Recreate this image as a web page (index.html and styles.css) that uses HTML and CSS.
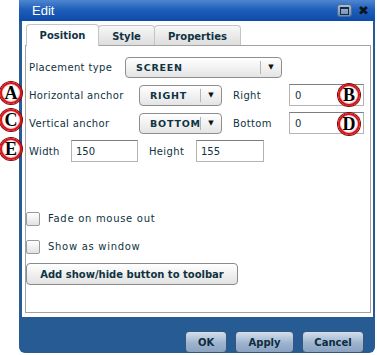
FILE: index.html
```html
<!DOCTYPE html>
<html lang="en">
<head>
  <meta charset="UTF-8">
  <title>Edit</title>
  <link rel="stylesheet" href="styles.css">
</head>
<body>
  <div class="dialog">
    <div class="titlebar">
      <span class="title">Edit</span>
      <span class="win-btn max"><span></span></span>
      <span class="win-btn close">&#x2716;</span>
    </div>

    <div class="body">
      <div class="tabs">
        <div class="tab active">Position</div>
        <div class="tab">Style</div>
        <div class="tab">Properties</div>
      </div>

      <div class="panel">
        <div class="row">
          <span class="label w-place">Placement type</span>
          <div class="select w-screen"><span class="value">SCREEN</span><span class="arrow">&#9660;</span></div>
        </div>
        <div class="row">
          <span class="label w-anchor">Horizontal anchor</span>
          <div class="select w-small"><span class="value">RIGHT</span><span class="arrow">&#9660;</span></div>
          <span class="label w-side">Right</span>
          <input class="field w-side-input" type="text" value="0">
        </div>
        <div class="row">
          <span class="label w-anchor">Vertical anchor</span>
          <div class="select w-small"><span class="value">BOTTOM</span><span class="arrow">&#9660;</span></div>
          <span class="label w-side">Bottom</span>
          <input class="field w-side-input" type="text" value="0">
        </div>
        <div class="row">
          <span class="label w-width">Width</span>
          <input class="field w-size" type="text" value="150">
          <span class="label w-height">Height</span>
          <input class="field w-size2" type="text" value="155">
        </div>

        <label class="check first"><span class="box"></span>Fade on mouse out</label>
        <label class="check"><span class="box"></span>Show as window</label>

        <button class="wide-btn">Add show/hide button to toolbar</button>
      </div>
    </div>

    <div class="footer">
      <button class="dlg-btn ok">OK</button>
      <button class="dlg-btn apply">Apply</button>
      <button class="dlg-btn cancel">Cancel</button>
    </div>
  </div>

  <!-- callout markers -->
  <span class="badge" style="left:0;top:82px">A</span>
  <span class="badge" style="left:338px;top:84px">B</span>
  <span class="badge" style="left:0;top:109px">C</span>
  <span class="badge" style="left:338px;top:113px">D</span>
  <span class="badge" style="left:0;top:138px">E</span>
</body>
</html>
```

FILE: styles.css
```css
:root {
  --frame: #275b94;
  --text: #0f3342;
  --line: #a3a3a3;
}

body {
  margin: 0;
  background: #fff;
  font-family: 'DejaVu Sans', sans-serif;
  font-size: 10px;
  color: var(--text);
  position: relative;
  width: 377px;
  height: 355px;
  overflow: hidden;
}

.dialog {
  margin-left: 19px;
  width: 356px;
  height: 353px;
  background: var(--frame);
  border-radius: 0 0 6px 6px;
  display: flex;
  flex-direction: column;
}

.titlebar {
  height: 21px;
  display: flex;
  align-items: center;
  padding: 0 6px 0 13px;
  background: linear-gradient(#4f86d0, #1f5fbb 45%, #0c4ca8);
  color: #fff;
}

.title {
  flex: 1;
  font-family: 'Liberation Sans', sans-serif;
  font-size: 13px;
}

.win-btn.max {
  width: 15px;
  height: 13px;
  border-radius: 3px;
  background: linear-gradient(#a9bdd6, #6d8db4);
  border: 1px solid #4d6f9a;
  box-sizing: border-box;
  display: flex;
  align-items: center;
  justify-content: center;
  margin-right: 6px;
}

.win-btn.max span {
  width: 7px;
  height: 5px;
  border: 1px solid #1a2a40;
  border-top-width: 2px;
}

.win-btn.close {
  color: #0b1420;
  font-size: 13px;
  font-weight: bold;
  line-height: 1;
  width: 11px;
}

.body {
  background: #fff;
  margin: 0 2px 0 3px;
  padding: 4px 2px 4px 3px;
  display: flex;
  flex-direction: column;
}

.tabs {
  display: flex;
  padding-left: 1px;
  height: 20px;
}

.tab {
  box-sizing: border-box;
  height: 21px;
  border: 1px solid #c4c4c4;
  border-bottom: none;
  border-radius: 4px 4px 0 0;
  background: linear-gradient(#f8f8f8, #dcdcdc);
  font-weight: bold;
  display: flex;
  align-items: center;
  justify-content: center;
  margin-right: -1px;
}

.tab:nth-child(1) { width: 73px; }
.tab:nth-child(2) { width: 57px; }
.tab:nth-child(3) { width: 87px; }

.tab.active {
  background: #fff;
  position: relative;
  z-index: 1;
  height: 22px;
  margin-top: -1px;
}

.panel {
  height: 256px;
  border: 1px solid var(--line);
  padding-top: 10px;
}

.row {
  display: flex;
  align-items: center;
  height: 22px;
  margin-bottom: 6px;
  padding-left: 3px;
}

.label {
  letter-spacing: 0.35px;
  white-space: nowrap;
}

.w-place { width: 96px; }
.w-anchor { width: 110px; }
.w-side { width: 56px; margin-left: 11px; }
.w-width { width: 42px; }
.w-height { width: 47px; margin-left: 11px; }

.select {
  box-sizing: border-box;
  height: 21px;
  border: 1px solid #8e8e8e;
  border-radius: 4px;
  background: linear-gradient(#fff, #e4e4e4);
  display: flex;
  align-items: center;
  font-weight: bold;
  font-size: 9.5px;
  letter-spacing: 0.8px;
  overflow: hidden;
}

.select .value {
  flex: 1;
  padding-left: 10px;
  white-space: nowrap;
  overflow: hidden;
}

.select .arrow {
  width: 20px;
  flex: none;
  border-left: 1px solid #b5b5b5;
  height: 13px;
  font-size: 7px;
  color: #111;
  display: flex;
  align-items: center;
  justify-content: center;
  letter-spacing: 0;
}

.w-screen { width: 157px; }
.w-small { width: 83px; }

.field {
  box-sizing: border-box;
  height: 22px;
  border: 1px solid #b4b4b4;
  border-top-color: #7d7d7d;
  padding: 0 4px;
  font-family: 'DejaVu Sans', sans-serif;
  font-size: 10px;
  color: var(--text);
  outline: none;
}

.w-side-input { width: 75px; padding-left: 5px; }
.w-size { width: 67px; }
.w-size2 { width: 68px; }

.check {
  display: flex;
  align-items: center;
  height: 13px;
  margin-bottom: 15px;
  letter-spacing: 0.7px;
}

.check.first { margin-top: 50px; }

.check .box {
  box-sizing: border-box;
  width: 14px;
  height: 14px;
  border: 1px solid #9a9a9a;
  border-radius: 2px;
  background: linear-gradient(#fff, #e2e2e2);
  margin-right: 8px;
}

.wide-btn {
  display: block;
  margin-top: -5px;
  width: 212px;
  height: 22px;
  border: 1px solid #8a8a8a;
  border-radius: 4px;
  background: linear-gradient(#fff, #e2e2e2);
  font-family: 'DejaVu Sans', sans-serif;
  font-weight: bold;
  font-size: 10px;
  color: var(--text);
  padding: 0;
}

.footer {
  flex: 1;
  display: flex;
  justify-content: flex-end;
  align-items: flex-start;
  padding: 14px 11px 0 0;
  gap: 8px;
}

.dlg-btn {
  height: 22px;
  border: 1px solid #3a5677;
  border-radius: 4px;
  background: linear-gradient(#d3dfec, #9db4cf 55%, #8aa3c1);
  font-family: 'DejaVu Sans', sans-serif;
  font-weight: bold;
  font-size: 10px;
  color: #0e2c3e;
  padding: 0;
}

.ok { width: 42px; }
.apply { width: 59px; }
.cancel { width: 62px; }

.badge {
  position: absolute;
  box-sizing: border-box;
  width: 22px;
  height: 22px;
  border-radius: 50%;
  border: 2px solid #d8141a;
  box-shadow: 0 0 0 1px #7a0a0a, inset 0 0 2px #e88;
  background: radial-gradient(circle at 40% 35%, #fff 55%, #f1d7d7);
  font-family: 'Liberation Serif', serif;
  font-weight: bold;
  font-size: 18px;
  line-height: 18px;
  text-align: center;
  color: #000;
}
```
